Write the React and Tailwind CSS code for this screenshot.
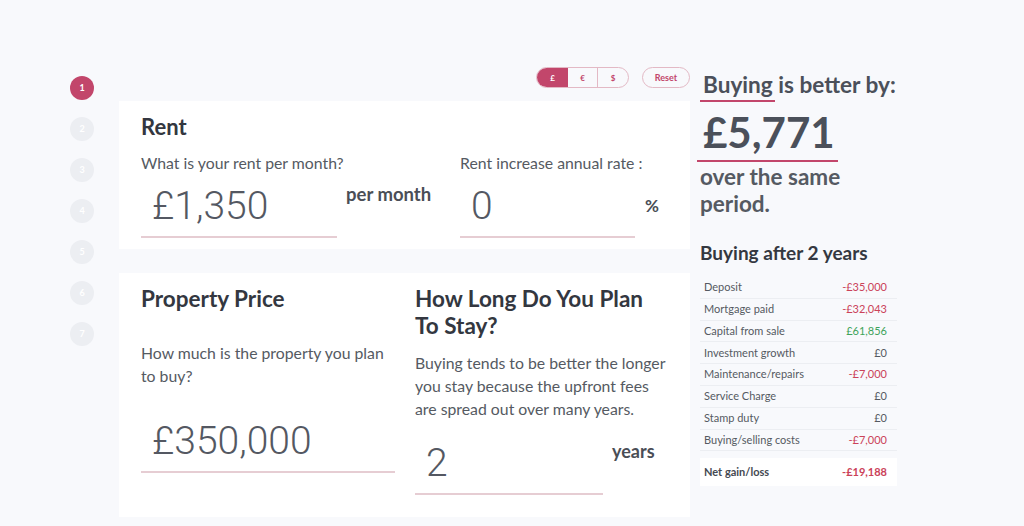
import React from "react";

const font = { fontFamily: "Lato, 'Open Sans', sans-serif" };

function Step({ n, active }) {
  return (
    <div
      className={
        "w-[24px] h-[24px] rounded-full flex items-center justify-center text-[9px] font-bold text-white " +
        (active ? "bg-[#c2466b]" : "bg-[#eceef2]")
      }
    >
      {n}
    </div>
  );
}

function Field({ value, width, unit, unitClass }) {
  return (
    <div className="flex items-start">
      <div className={width}>
        <div className="h-[46px] pl-[11px] flex items-center text-[39px] leading-none text-[#545862] font-['Roboto',sans-serif] font-light">
          {value}
        </div>
        <div className="mt-[7px] h-[2px] bg-[#e6cdd3]" />
      </div>
      {unit && <div className={unitClass}>{unit}</div>}
    </div>
  );
}

const rows = [
  ["Deposit", "-£35,000", "r"],
  ["Mortgage paid", "-£32,043", "r"],
  ["Capital from sale", "£61,856", "g"],
  ["Investment growth", "£0", ""],
  ["Maintenance/repairs", "-£7,000", "r"],
  ["Service Charge", "£0", ""],
  ["Stamp duty", "£0", ""],
  ["Buying/selling costs", "-£7,000", "r"],
];

export default function App() {
  return (
    <div
      className="w-[1024px] h-[526px] bg-[#f8f9fc] overflow-hidden flex pl-[70px] pt-[67px] text-[#3b3f47]"
      style={font}
    >
      {/* steps */}
      <div className="w-[24px] mt-[9px] flex flex-col gap-[17px]">
        <Step n={1} active />
        <Step n={2} />
        <Step n={3} />
        <Step n={4} />
        <Step n={5} />
        <Step n={6} />
        <Step n={7} />
      </div>

      {/* main */}
      <div className="ml-[25px] w-[571px]">
        <div className="h-[21px] flex justify-end gap-[13px]">
          <div className="flex h-[21px] rounded-full border border-[#e3b9c5] overflow-hidden text-[8px] font-bold">
            <div className="w-[31px] flex items-center justify-center bg-[#c2466b] text-white">£</div>
            <div className="w-[30px] flex items-center justify-center text-[#c2466b] border-r border-[#e3b9c5]">€</div>
            <div className="w-[30px] flex items-center justify-center text-[#c2466b]">$</div>
          </div>
          <div className="w-[48px] h-[21px] rounded-full border border-[#e3b9c5] flex items-center justify-center text-[9px] font-bold text-[#c2466b]">
            Reset
          </div>
        </div>

        {/* Rent card */}
        <div className="mt-[13px] h-[148px] bg-white px-[22px] pt-[12px] grid grid-cols-[319px_1fr]">
          <div>
            <div className="text-[22px] font-bold leading-[28px] text-[#333740]">Rent</div>
            <div className="mt-[12px] text-[15.8px] leading-[20px] text-[#555a62]">What is your rent per month?</div>
            <div className="mt-[10px]">
              <Field
                value="£1,350"
                width="w-[196px]"
                unit="per month"
                unitClass="ml-[9px] leading-[22px] text-[18.5px] font-bold text-[#4a4e56]"
              />
            </div>
          </div>
          <div className="pt-[40px]">
            <div className="text-[15.8px] leading-[20px] text-[#555a62]">Rent increase annual rate :</div>
            <div className="mt-[10px]">
              <Field
                value="0"
                width="w-[175px]"
                unit="%"
                unitClass="ml-[10px] mt-[12px] leading-[22px] text-[17px] font-bold text-[#4a4e56]"
              />
            </div>
          </div>
        </div>

        {/* Property card */}
        <div className="mt-[24px] h-[244px] bg-white px-[22px] pt-[12px] grid grid-cols-[274px_1fr]">
          <div>
            <div className="text-[22.5px] font-bold leading-[28px] text-[#333740]">Property Price</div>
            <div className="mt-[28px] w-[254px] text-[15.8px] leading-[23px] text-[#555a62]">
              How much is the property you plan to buy?
            </div>
            <div className="mt-[31px]">
              <Field value="£350,000" width="w-[254px]" />
            </div>
          </div>
          <div>
            <div className="text-[22.5px] font-bold leading-[27px] text-[#333740] w-[245px]">
              How Long Do You Plan To Stay?
            </div>
            <div className="mt-[12px] w-[253px] text-[15.8px] leading-[23px] text-[#555a62]">
              Buying tends to be better the longer you stay because the upfront fees are spread out over many years.
            </div>
            <div className="mt-[20px]">
              <Field
                value="2"
                width="w-[188px]"
                unit="years"
                unitClass="ml-[9px] leading-[22px] text-[18px] font-bold text-[#4a4e56]"
              />
            </div>
          </div>
        </div>
      </div>

      {/* right panel */}
      <div className="ml-[10px] w-[200px] text-[#4b505a]">
        <div className="text-[22.6px] font-bold leading-[30px] mt-[3px] pl-[3px] whitespace-nowrap">
          <span className="relative">
            Buying
            <span className="absolute left-[-3px] right-[-2px] bottom-[-4px] h-[2px] bg-[#c2466b]" />
          </span>{" "}
          is better by:
        </div>
        <div className="mt-[8px] pl-[3px] text-[42px] font-bold leading-[48px] w-[138px] relative">
          £5,771
          <span className="absolute left-[-3px] right-0 bottom-[-6px] h-[2px] bg-[#c2466b]" />
        </div>
        <div className="mt-[7px] text-[22.5px] font-bold leading-[27px] text-[#555a62]">
          over the same
          <br />
          period.
        </div>
        <div className="mt-[24px] text-[19px] font-bold leading-[24px] text-[#343841]">Buying after 2 years</div>
        <div className="mt-[12px] w-[197px] text-[11px]">
          {rows.map(([l, v, c]) => (
            <div
              key={l}
              className="h-[21.8px] flex items-center justify-between pl-[4px] pr-[10px] border-b border-[#eceef2] text-[#555a62]"
            >
              <span>{l}</span>
              <span className={c === "r" ? "text-[#cb4259]" : c === "g" ? "text-[#3ea35a]" : "text-[#555a62]"}>{v}</span>
            </div>
          ))}
          <div className="mt-[7px] h-[28px] bg-white flex items-center justify-between pl-[4px] pr-[10px] font-bold text-[#454952]">
            <span>Net gain/loss</span>
            <span className="text-[#cb4259]">-£19,188</span>
          </div>
        </div>
      </div>
    </div>
  );
}
